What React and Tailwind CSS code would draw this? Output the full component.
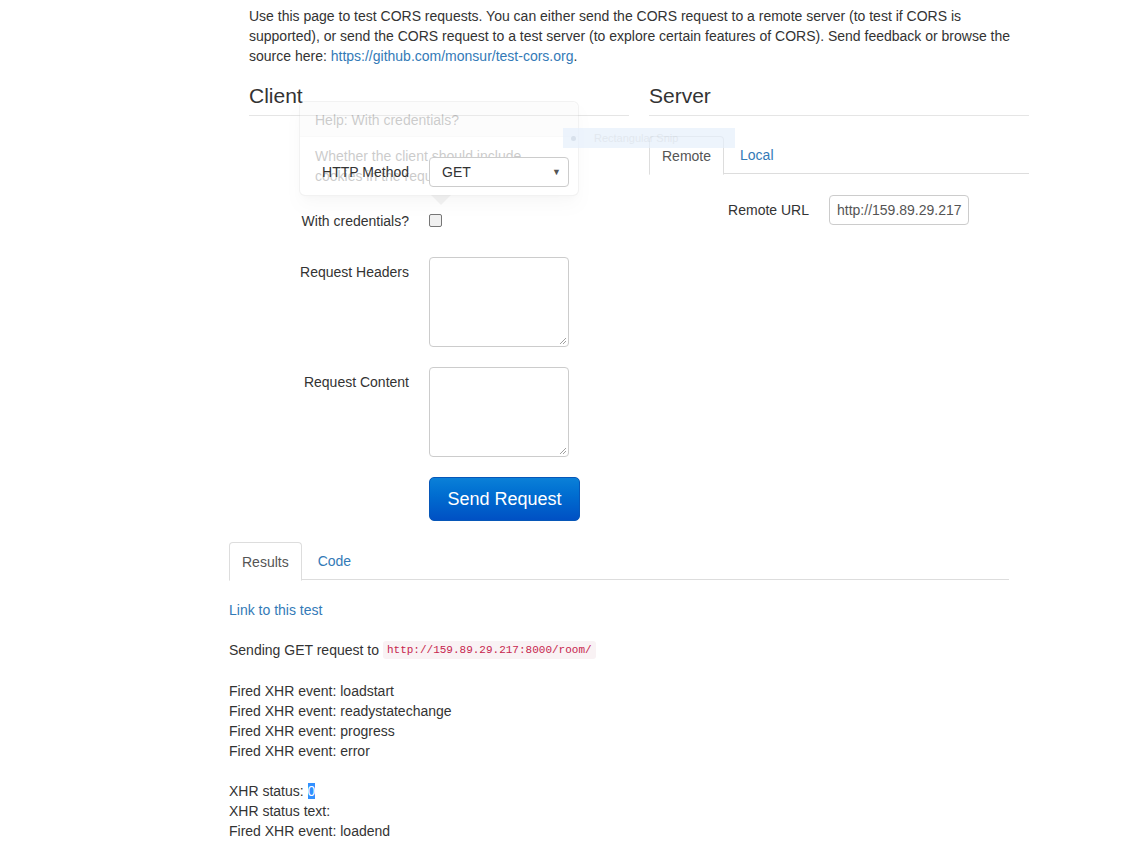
import React from 'react'

const font = { fontFamily: '"Liberation Sans", Arial, sans-serif' }

function FormRow({ label, children, labelPad = 'pt-[7px]', className = '' }) {
  return (
    <div className={`relative z-10 flex ${className}`}>
      <div className={`w-[160px] shrink-0 text-right leading-5 ${labelPad}`}>{label}</div>
      <div className="ml-5">{children}</div>
    </div>
  )
}

function Tabs({ items, width }) {
  return (
    <div className={`flex h-[38px] border-b border-[#ddd] ${width}`}>
      {items.map((t, i) =>
        i === 0 ? (
          <div
            key={t}
            className="mr-1 -mb-px flex h-[39px] items-center rounded-t border border-[#ddd] border-b-white bg-white px-3 text-[#555]"
          >
            {t}
          </div>
        ) : (
          <div key={t} className="flex h-[38px] items-center px-3 text-[#337ab7]">
            {t}
          </div>
        )
      )}
    </div>
  )
}

function Grip() {
  return (
    <svg className="absolute bottom-[2px] right-[2px]" width="7" height="7" viewBox="0 0 7 7">
      <path d="M1 7L7 1M4 7L7 4" stroke="#888" strokeWidth="0.8" />
    </svg>
  )
}

export default function App() {
  return (
    <div className="min-h-[860px] w-full bg-white text-[14px] leading-5 text-[#333]" style={font}>
      <div className="relative ml-[229px] w-[800px]">
        {/* intro */}
        <p className="pl-5 pt-[6px]">
          Use this page to test CORS requests. You can either send the CORS request to a remote server (to test if CORS is
          supported), or send the CORS request to a test server (to explore certain features of CORS). Send feedback or
          browse the source here: <a className="text-[#337ab7]">https://github.com/monsur/test-cors.org</a>.
        </p>

        <div className="mt-[18px] flex gap-5 pl-5">
          {/* client */}
          <div className="w-[380px]">
            <h3 className="h-[32px] border-b border-[#e5e5e5] text-[21px] leading-[23px]">Client</h3>

            <FormRow label="HTTP Method" labelPad="pt-[5px]" className="mt-[41px]">
              <div className="flex h-[30px] w-[140px] items-center justify-between rounded border border-[#ccc] bg-white pl-3 pr-[7px]">
                <span>GET</span>
                <span className="text-[9px] text-[#555]">▼</span>
              </div>
            </FormRow>

            <FormRow label="With credentials?" labelPad="pt-[9px]" className="mt-[15px] h-[40px]">
              <div className="mt-3 h-[13px] w-[13px] rounded-[2px] border border-[#767676] bg-[#f0f0f0]" />
            </FormRow>

            <FormRow label="Request Headers" labelPad="pt-[5px]" className="mt-[15px]">
              <div className="relative h-[90px] w-[140px] rounded border border-[#ccc] bg-white">
                <Grip />
              </div>
            </FormRow>

            <FormRow label="Request Content" labelPad="pt-[5px]" className="mt-5">
              <div className="relative h-[90px] w-[140px] rounded border border-[#ccc] bg-white">
                <Grip />
              </div>
            </FormRow>

            <FormRow label="" className="mt-5">
              <button className="h-[44px] w-[151px] rounded-[5px] border border-[#0757b8] bg-gradient-to-b from-[#0b80d8] to-[#0050c4] text-[18px] text-white">
                Send Request
              </button>
            </FormRow>
          </div>

          {/* server */}
          <div className="w-[380px]">
            <h3 className="h-[32px] border-b border-[#e5e5e5] text-[21px] leading-[23px]">Server</h3>
            <div className="mt-5">
              <Tabs items={['Remote', 'Local']} width="w-full" />
            </div>
            <div className="mt-[21px] flex">
              <div className="w-[160px] pt-[5px] text-right">Remote URL</div>
              <div className="ml-5 flex h-[30px] w-[140px] items-center overflow-hidden whitespace-nowrap rounded border border-[#ccc] pl-[7px] text-[#555]">
                http://159.89.29.217
              </div>
            </div>
          </div>
        </div>

        {/* results */}
        <div className="mt-[21px] w-[780px]">
          <Tabs items={['Results', 'Code']} width="w-full" />
          <div className="mt-5 text-[#337ab7]">Link to this test</div>
          <div className="mt-5 flex items-center">
            <span>Sending GET request to</span>
            <code
              className="ml-1 rounded-[3px] bg-[#f9f2f4] px-1 text-[11px] leading-[18px] text-[#c7254e]"
              style={{ fontFamily: '"Liberation Mono", monospace' }}
            >
              http://159.89.29.217:8000/room/
            </code>
          </div>
          <div className="mt-[21px]">
            <div>Fired XHR event: loadstart</div>
            <div>Fired XHR event: readystatechange</div>
            <div>Fired XHR event: progress</div>
            <div>Fired XHR event: error</div>
          </div>
          <div className="mt-5">
            <div>
              XHR status: <span className="bg-[#3390ff] text-white">0</span>
            </div>
            <div>XHR status text:</div>
            <div>Fired XHR event: loadend</div>
          </div>
        </div>

        {/* fading popover */}
        <div className="absolute left-[70px] top-[101px] z-0 w-[280px] rounded-md border border-black/20 bg-white opacity-25 shadow-lg">
          <div className="h-[35px] rounded-t-md border-b border-[#ebebeb] bg-[#f7f7f7] px-[15px] pt-2">Help: With credentials?</div>
          <div className="px-[15px] pb-[9px] pt-[9px]">
            Whether the client should include
            <br />
            cookies in the request.
          </div>
          <div className="absolute -bottom-[10px] left-[131px] h-0 w-0 border-x-[10px] border-t-[10px] border-x-transparent border-t-black/20" />
        </div>

        {/* snipping tool ghost */}
        <div className="absolute left-[334px] top-[128px] z-20 flex h-[20px] w-[172px] items-center bg-[#e6f0fc] text-[11px] text-[#d6dfe9] opacity-70">
          <span className="ml-[8px] h-[5px] w-[5px] rounded-full bg-[#c8d5e5]" />
          <span className="ml-[18px]">Rectangular Snip</span>
        </div>
      </div>
    </div>
  )
}
